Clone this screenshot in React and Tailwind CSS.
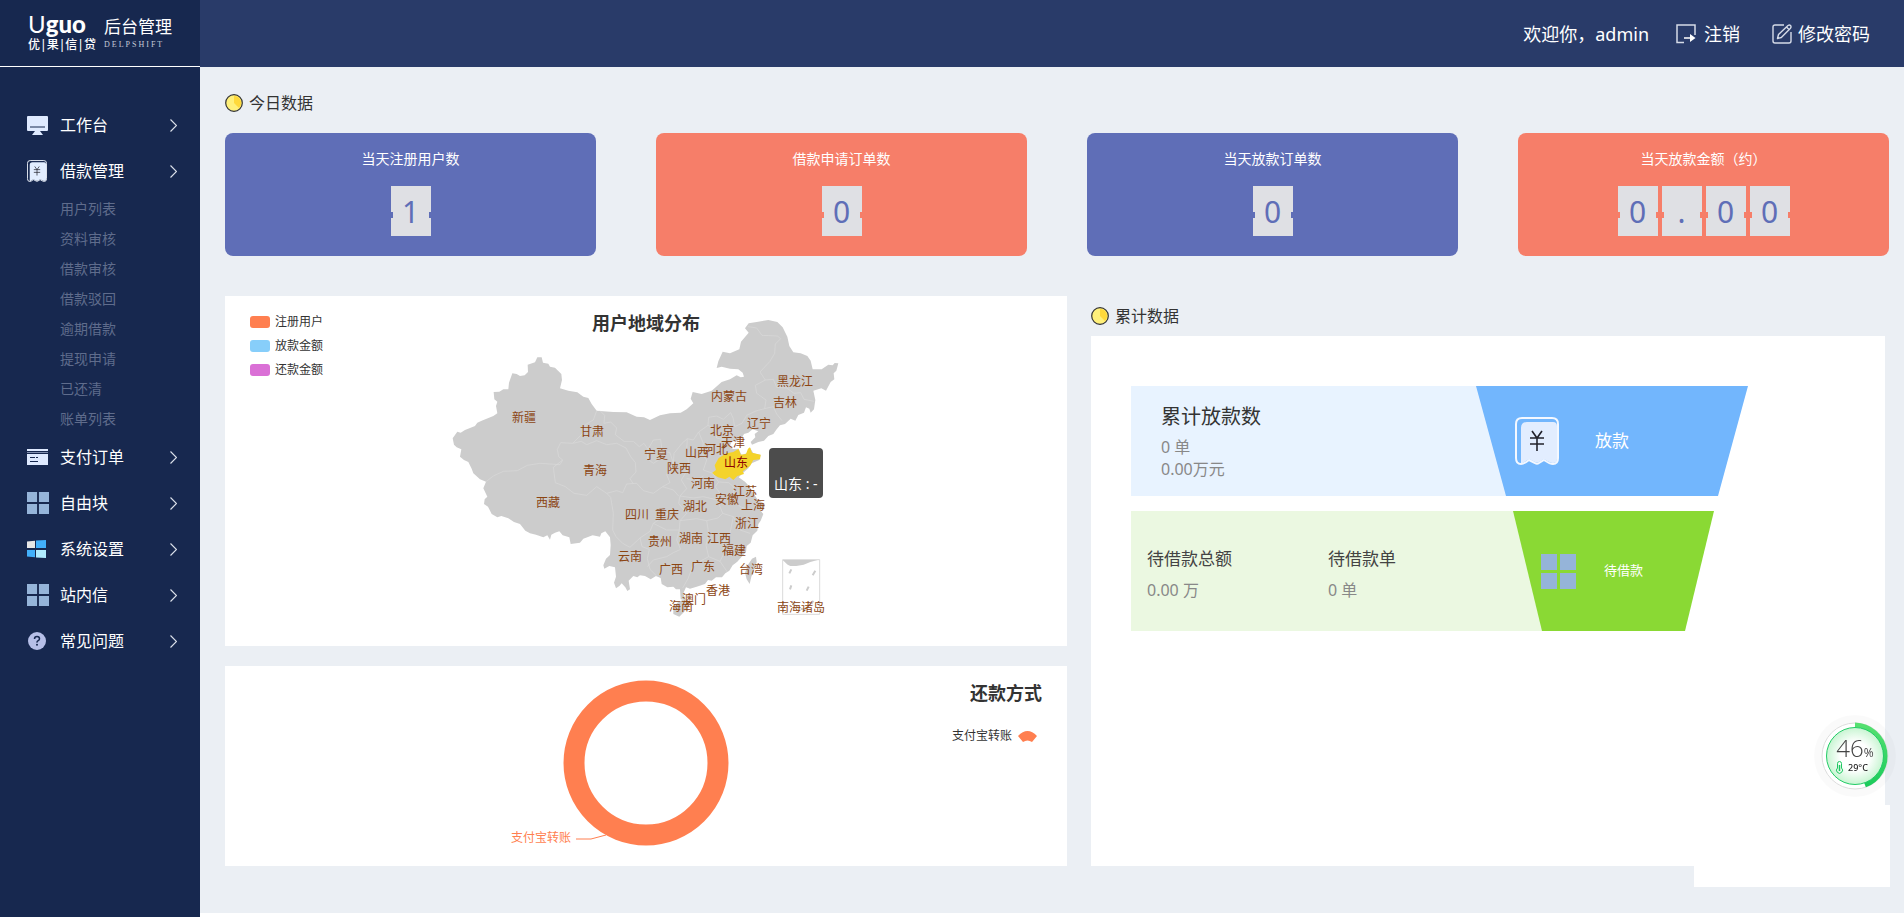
import { useState } from "react";

const MonitorIcon = () => (
  <svg width="21" height="19" viewBox="0 0 21 19">
    <rect width="21" height="15" rx="1" fill="#dfeaff" />
    <path d="M3 11h15" stroke="#17284f" strokeWidth="1" />
    <path d="M8 15h5l3 4H5z" fill="#dfeaff" />
  </svg>
);

const BillIcon = ({ size = "small" }) => (
  <svg
    className={size === "large" ? "w-[44px] h-[48px]" : "w-5 h-[22px]"}
    viewBox="0 0 44 48"
    fill="none"
  >
    <path
      d="M6 11q0-6 6-6h26q4 0 4 4v33q0 4-4 4-3 0-9-4l-5 3q-2 1.500-4 0l-6-3-8 5z"
      fill="#e2edff"
    />
    <path
      d="M1 7q0-6 6-6h30q6 0 6 6v34q0 6-5 6-3 0-9-4l-5 3q-2 1.500-4 0l-6-3q-5 4-8 4-5 0-5-6z"
      stroke="#f4f8ff"
      strokeWidth="2"
    />
    <path
      d="M17 14l5 7 5-7M15 21h14M15 27h14M22 21v13"
      stroke="#22222c"
      strokeWidth="1.6"
    />
  </svg>
);

const CardIcon = () => (
  <svg width="21" height="16" viewBox="0 0 21 16">
    <path d="M0 0h21v2H0zM0 5h21v11H0z" fill="#dfeaff" />
    <path d="M0 3.5h21" stroke="#7f8dad" />
    <path d="M3 8.5h5M9 8.5h2M3 12.5h8" stroke="#17284f" />
  </svg>
);

const BlocksIcon = ({ size = "small" }) => (
  <svg
    className={size === "large" ? "w-[35px] h-[35px]" : "w-[22px] h-[22px]"}
    viewBox="0 0 35 35"
    fill="#95b4d9"
  >
    <path d="M0 0h16v16H0zM19 0h16v16H19zM0 19h16v16H0zM19 19h16v16H19z" />
  </svg>
);

const WindowsIcon = () => (
  <svg width="19" height="18" viewBox="0 0 19 18">
    <path d="M0 1.5L8 .8V8H0z" fill="#e6e6e6" />
    <path d="M9 .6L19 0v8H9z" fill="#42b0fb" />
    <path d="M0 10h8v7.3l-8-.8z" fill="#42b0fb" />
    <path d="M9 10h10v8l-10-.6z" fill="#b0ecff" />
  </svg>
);

const HelpIcon = () => (
  <svg className="ml-px" width="18" height="18" viewBox="0 0 18 18" fill="none">
    <circle cx="9" cy="9" r="9" fill="#b6bfe8" />
    <path
      d="M6.5 7q0-2.5 2.5-2.5T11.5 6.8q0 1.2-1.3 1.9T9 10.6"
      stroke="#17284f"
      strokeWidth="1.5"
    />
    <circle cx="9" cy="12.8" r="1" fill="#17284f" />
  </svg>
);

const LogoutIcon = () => (
  <svg width="20" height="20" viewBox="0 0 20 20" fill="none">
    <path d="M19 11V1H1v17.5h7" stroke="#d5dbe8" strokeWidth="1.5" />
    <path d="M8 14h6" stroke="#fff" strokeWidth="1.5" />
    <path d="M14 10l5.5 4-5.5 4z" fill="#fff" />
  </svg>
);

const EditIcon = () => (
  <svg
    width="20"
    height="20"
    viewBox="0 0 20 20"
    fill="none"
    stroke="#d5dbe8"
    strokeWidth="1.4"
    strokeLinejoin="round"
  >
    <path d="M12 1H3Q1 1 1 3v14q0 2 2 2h14q2 0 2-2V8" />
    <path d="M5.5 14.5l1-4L16 1.5q1.5-1 2.5 0t0 2.7L9.3 13.5zM14.500 3l2.500 2.500" />
  </svg>
);

const PieIcon = () => (
  <svg width="18" height="18" viewBox="0 0 18 18">
    <circle cx="9" cy="9" r="8.3" fill="#fff07a" stroke="#333" strokeWidth="1.2" />
    <path d="M9 9V2a7 7 0 0 1 5 12z" fill="#ffd93b" />
  </svg>
);

const Chevron = () => (
  <svg width="7" height="13" viewBox="0 0 7 13" fill="none" stroke="#dbe0ea">
    <path d="M.5.5l6 6-6 6" strokeWidth="1.2" />
  </svg>
);

const menu = [
  { name: "工作台", icon: <MonitorIcon /> },
  {
    name: "借款管理",
    icon: <BillIcon />,
    children: [
      "用户列表",
      "资料审核",
      "借款审核",
      "借款驳回",
      "逾期借款",
      "提现申请",
      "已还清",
      "账单列表",
    ],
  },
  { name: "支付订单", icon: <CardIcon /> },
  { name: "自由块", icon: <BlocksIcon /> },
  { name: "系统设置", icon: <WindowsIcon /> },
  { name: "站内信", icon: <BlocksIcon /> },
  { name: "常见问题", icon: <HelpIcon /> },
];

const todayStats = [
  { title: "当天注册用户数", value: "1", color: "bg-[#5f6eb7]" },
  { title: "借款申请订单数", value: "0", color: "bg-[#f67e69]" },
  { title: "当天放款订单数", value: "0", color: "bg-[#5f6eb7]" },
  { title: "当天放款金额（约）", value: "0.00", color: "bg-[#f67e69]" },
];

const mapLegend = [
  { name: "注册用户", color: "bg-[#ff7f50]" },
  { name: "放款金额", color: "bg-[#87cefa]" },
  { name: "还款金额", color: "bg-[#da70d6]" },
];

// label centre points on the map canvas
const provinces = [
  ["新疆", 84, 118],
  ["甘肃", 152, 132],
  ["青海", 155, 171],
  ["西藏", 108, 203],
  ["宁夏", 216, 155],
  ["陕西", 239, 169],
  ["山西", 257, 153],
  ["河北", 276, 150],
  ["北京", 282, 131],
  ["天津", 293, 143],
  ["内蒙古", 289, 97],
  ["黑龙江", 355, 82],
  ["吉林", 345, 103],
  ["辽宁", 319, 124],
  ["河南", 263, 184],
  ["江苏", 305, 192],
  ["安徽", 287, 200],
  ["上海", 313, 206],
  ["浙江", 307, 224],
  ["湖北", 255, 207],
  ["四川", 197, 215],
  ["重庆", 227, 215],
  ["贵州", 220, 242],
  ["湖南", 251, 239],
  ["江西", 279, 239],
  ["福建", 294, 251],
  ["云南", 190, 257],
  ["广西", 231, 270],
  ["广东", 263, 267],
  ["台湾", 311, 270],
  ["香港", 278, 291],
  ["澳门", 254, 300],
  ["海南", 241, 307],
  ["南海诸岛", 361, 308],
];

const ChinaMap = () => (
  <svg width="420" height="340" viewBox="-4 0 420 340">
    <g transform="scale(0.33333)">
      <g fill="#ccc">
        <path d="M38 415L52 395 62 398 75 390 105 378 112 368 125 362 160 348 172 340 168 318 172 305 163 298 161 276 178 275 190 268 205 268 207 248 217 220 230 222 240 228 254 226 264 216 263 194 285 187 292 172 305 172 309 188 325 191 330 200 345 203 364 222 366 240 360 265 385 272 412 277 430 290 445 294 455 312 470 332 520 336 560 337 590 350 612 352 630 360 660 346 690 340 722 338 740 328 760 310 752 296 758 276 785 282 815 272 845 246 870 238 890 226 902 232 912 230 908 218 895 208 870 206 845 200 830 204 835 184 848 155 870 160 898 148 903 125 926 98 915 85 926 70 950 66 985 60 1012 66 1028 82 1042 110 1048 138 1060 157 1082 160 1102 168 1112 182 1118 208 1145 208 1165 194 1178 196 1184 189 1195 190 1189 212 1181 220 1183 238 1172 246 1158 272 1144 265 1120 272 1126 300 1122 328 1112 338 1108 326 1098 322 1092 338 1075 345 1066 362 1052 356 1035 372 1020 376 1010 388 1000 402 985 408 972 422 955 426 936 434 932 426 946 412 944 402 955 394 938 388 925 398 912 402 905 415 890 424 876 424 868 440 880 447 895 446 905 465 920 460 930 443 940 460 962 465 958 480 935 490 925 505 908 520 896 532 915 545 930 562 942 582 952 598 975 612 972 626 960 630 970 642 962 662 955 672 952 692 938 706 932 728 920 738 918 756 905 770 892 785 878 796 868 812 856 820 846 832 828 832 815 842 804 840 795 852 770 860 750 866 738 862 730 880 737 900 722 898 720 868 708 868 700 860 682 862 665 852 662 834 648 828 632 838 615 828 600 826 592 832 580 828 566 842 570 868 562 873 556 862 545 850 538 858 528 865 522 848 528 830 525 802 508 798 493 806 490 796 498 776 510 765 512 735 510 712 496 694 484 700 480 710 458 706 430 716 420 728 392 732 388 712 368 706 358 694 345 698 334 704 330 719 322 706 310 712 288 704 270 700 256 692 240 672 222 666 205 655 184 648 172 652 155 642 144 620 132 612 134 598 142 590 130 565 138 545 120 538 100 520 95 506 85 486 72 480 60 470 64 448 50 442 42 434z" />
        <path d="M700 925L712 908 728 900 750 906 745 922 732 936 718 950 700 942z" />
        <path d="M924 794L936 776 948 770 950 786 942 812 934 830 929 852 920 838 915 818z" />
      </g>
      <path
        d="M815 520L828 510 824 496 836 474 860 460 880 456 896 446 902 464 918 462 924 446 930 442 936 458 962 464 960 478 940 480 930 498 908 514 912 522 892 528 880 540 868 530 856 538 834 532z"
        fill="#f4d32b"
      />
      <g fill="none" stroke="#dadada" strokeWidth="2" strokeLinejoin="round">
        <path d="M470 332L460 360 436 374 430 398 398 430 362 428 352 448 356 470 368 480 360 494 300 490 262 496 232 512 190 514 160 528 138 545" />
        <path d="M480 332L494 346 492 370 512 366 530 384 526 404 552 424 580 424 598 440 612 430 624 448" />
        <path d="M398 430L424 424 440 434 470 422 500 434 530 430 558 444 572 470 586 488 588 516 570 536 580 552" />
        <path d="M368 480L340 502 346 548 376 560 402 580 440 586 470 560 500 580 512 592 520 640 518 690 528 710" />
        <path d="M500 580L530 572 548 578 560 552 590 550 610 572 640 580 668 560 700 570 716 588" />
        <path d="M624 448L640 420 662 418 666 452 656 480 640 490 622 476zM666 452L690 458 700 490 680 524 690 548 668 560" />
        <path d="M700 490L702 460 726 430 742 416 760 420 776 396 804 376 806 352 830 348 850 358 872 338 880 356 884 380 906 370 920 346 950 332 974 326 978 300 950 280 946 256 976 240 960 216 990 184 1004 160 1006 132 1022 116 1012 108 966 106 950 84 924 80" />
        <path d="M976 240L1000 238 1010 262 1040 264 1062 280 1082 278 1092 298 1122 304M974 326L1000 320 1010 342 1026 362" />
        <path d="M742 416L740 450 746 490 736 520 724 540 740 566 720 588 716 610 740 640 720 662" />
        <path d="M776 396L790 430 784 460 800 480 790 510 818 520M804 376L830 390 830 414 856 420 870 440" />
        <path d="M740 536L770 540 790 528M818 520L836 546 826 560 840 580 832 600 848 640 834 654 800 662 770 656 720 662 718 690 710 720 722 748 700 758 680 770 640 780 622 800" />
        <path d="M720 588L760 594 790 590 832 600M800 662L806 700 798 736 806 770 780 784 758 800 744 836 728 864" />
        <path d="M848 640L880 650 900 690 930 700M880 650L870 700 850 726 852 760 840 784 806 770M840 784L862 816" />
        <path d="M836 546L866 548 880 560 882 596 900 620 930 630" />
        <path d="M528 710L548 730 570 742 600 714 606 740 628 748 622 776 630 808 650 828M600 714L630 694 640 670 670 650 700 630M640 670L680 690 718 690" />
        <rect x="1028" y="779" width="111" height="164" strokeWidth="3" />
        <path d="M1048 820l6-12M1050 868l4-12M1056 906l8 10M1082 926l14 4M1100 872l6-12M1118 826l8-14M1120 902l-6 10" stroke="#ccc" strokeWidth="6" />
      </g>
      <path d="M1028 780h105l-22 6-20 8-22 4-18 0-8-4z" fill="#ccc" />
    </g>
    <g className="text-[12px]" fill="#8b4513" textAnchor="middle">
      {provinces.map(([name, x, y]) => (
        <text key={name} x={x} y={y + 4}>
          {name}
        </text>
      ))}
      <text x="296" y="167" fill="#8b0000">
        山东
      </text>
    </g>
  </svg>
);

const SectionTitle = ({ children }) => (
  <h2 className="flex items-center gap-1.5 text-base leading-6 text-[#333]">
    <PieIcon />
    {children}
  </h2>
);

const Sidebar = () => {
  const [open, setOpen] = useState("借款管理");

  return (
    <aside className="w-[200px] shrink-0 bg-[#17284f] text-white">
      <nav className="pt-[35px]">
        {menu.map((item) => (
          <div key={item.name}>
            <button
              onClick={() => setOpen(open === item.name ? "" : item.name)}
              className="flex items-center w-full h-[46px] pl-[27px] pr-[23px] text-base cursor-pointer"
            >
              <span className="w-[33px]">{item.icon}</span>
              <span className="flex-1 text-left">{item.name}</span>
              <Chevron />
            </button>
            {item.children && open === item.name && (
              <ul>
                {item.children.map((child) => (
                  <li key={child}>
                    <a
                      href="#"
                      className="block pl-[60px] text-sm leading-[30px] text-[#5f6c8c] hover:text-white"
                    >
                      {child}
                    </a>
                  </li>
                ))}
              </ul>
            )}
          </div>
        ))}
      </nav>
    </aside>
  );
};

const Header = () => (
  <header className="flex h-[67px] bg-[#293b69] text-white">
    <div className="flex w-[200px] shrink-0 gap-2 border-b border-white bg-[#17284f] pl-7 pt-3">
      <div className="w-[68px]">
        <p className="font-['Lato'] text-2xl leading-6">
          U<b className="font-black">guo</b>
        </p>
        <p className="mt-px flex justify-between text-xs leading-4 font-medium">
          <span>优</span>|<span>果</span>|<span>信</span>|<span>贷</span>
        </p>
      </div>
      <div className="pt-1">
        <p className="text-[17px] leading-[22px]">后台管理</p>
        <p className="mt-0.5 font-['Liberation_Serif'] text-[8px] leading-[10px] tracking-[2px] text-[#c5cbd8]">
          DELPSHIFT
        </p>
      </div>
    </div>
    <div className="flex flex-1 items-center justify-end pr-[34px] text-lg">
      <span>欢迎你，admin</span>
      <a href="#" className="ml-[27px] flex items-center gap-2">
        <LogoutIcon />
        注销
      </a>
      <a href="#" className="ml-8 flex items-center gap-1.5">
        <EditIcon />
        修改密码
      </a>
    </div>
  </header>
);

const StatCard = ({ title, value, color }) => (
  <div className={`rounded-lg pt-4 pb-5 text-center text-white ${color}`}>
    <p className="text-sm leading-5">{title}</p>
    <div className="mt-[17px] flex justify-center gap-1">
      {value.split("").map((digit, i) => (
        <span
          key={i}
          className="relative flex h-[50px] w-10 items-center justify-center bg-[#dfe0e4] text-[30px] text-[#5f6eb7]"
        >
          {digit}
          <i className={`absolute top-[26px] left-0 h-1.5 w-0.5 ${color}`} />
          <i className={`absolute top-[26px] right-0 h-1.5 w-0.5 ${color}`} />
        </span>
      ))}
    </div>
  </div>
);

const MapPanel = () => (
  <section className="relative h-[350px] bg-white pt-1">
    <h3 className="absolute inset-x-0 top-[13px] text-center text-lg font-bold text-[#333]">
      用户地域分布
    </h3>
    <ul className="absolute left-[25px] top-3.5 text-xs leading-6 text-[#333]">
      {mapLegend.map((item) => (
        <li key={item.name} className="flex items-center gap-[5px]">
          <i className={`h-3 w-5 rounded-[3px] ${item.color}`} />
          {item.name}
        </li>
      ))}
    </ul>
    <div className="relative mx-auto w-[420px]">
      <ChinaMap />
      <div className="absolute left-[333px] top-[148px] rounded bg-[#4c4c4c] px-[5px] pt-[26px] pb-1 text-sm leading-5 text-white whitespace-nowrap">
        山东 : -
      </div>
    </div>
  </section>
);

const RepayPanel = () => (
  <section className="relative h-[200px] bg-white">
    <svg className="mx-auto block" width="300" height="200" viewBox="0 0 300 200">
      <circle cx="150" cy="97" r="72" fill="none" stroke="#ff7f50" strokeWidth="21" />
      <path d="M80 173h15l15-4" fill="none" stroke="#ff7f50" />
      <text x="15" y="176" fill="#ff7f50" className="text-[12px]">
        支付宝转账
      </text>
    </svg>
    <div className="absolute right-[25px] top-[13px] flex flex-col items-end text-[#333]">
      <h3 className="text-lg leading-7 font-bold">还款方式</h3>
      <p className="mt-5 mr-[5px] flex items-center gap-1.5 text-xs leading-[18px]">
        支付宝转账
        <svg width="19" height="11" viewBox="0 0 19 11">
          <path d="M0 5Q9.5-5 19 5l-5 6q-4.5-3-9 0z" fill="#ff7f50" />
        </svg>
      </p>
    </div>
  </section>
);

const TotalPanel = () => (
  <section className="flex flex-col pr-1">
    <div className="flex h-10 items-center">
      <SectionTitle>累计数据</SectionTitle>
    </div>
    <div className="flex-1 bg-white pl-10 pt-[50px]">
      <div className="mr-[137px] flex h-[110px]">
        <div className="flex-1 bg-[#e8f3ff] pl-[30px] pt-[17px]">
          <h3 className="text-xl leading-7 text-[#333]">累计放款数</h3>
          <p className="mt-[5px] leading-[22px] text-[#888]">0 单</p>
          <p className="leading-[22px] text-[#888]">0.00万元</p>
        </div>
        <div className="-ml-[30px] flex w-[272px] items-center bg-[#72b6fd] pl-[39px] text-[17px] text-white [clip-path:polygon(0_0,100%_0,calc(100%-30px)_100%,30px_100%)]">
          <BillIcon size="large" />
          <span className="ml-9">放款</span>
        </div>
      </div>

      <div className="mr-[171px] mt-[15px] flex h-[120px]">
        <div className="flex flex-1 bg-[#ebf8e1] pl-4 pt-9">
          <div className="w-[181px]">
            <h3 className="text-[17px] leading-6 text-[#444]">待借款总额</h3>
            <p className="mt-[7px] leading-6 text-[#888]">0.00 万</p>
          </div>
          <div>
            <h3 className="text-[17px] leading-6 text-[#444]">待借款单</h3>
            <p className="mt-[7px] leading-6 text-[#888]">0 单</p>
          </div>
        </div>
        <div className="-ml-[29px] flex w-[201px] items-center bg-[#8ad934] pl-7 text-[13px] text-white [clip-path:polygon(0_0,100%_0,calc(100%-29px)_100%,29px_100%)]">
          <BlocksIcon size="large" />
          <span className="ml-7">待借款</span>
        </div>
      </div>
    </div>
  </section>
);

const MonitorBall = () => (
  <div className="fixed right-2 bottom-[120px] size-[82px]">
    <svg className="absolute inset-0" width="82" height="82" viewBox="0 0 82 82">
      <defs>
        <radialGradient id="ball">
          <stop offset="0.5" stopColor="#fff" />
          <stop offset="1" stopColor="#c8f5d2" />
        </radialGradient>
        <linearGradient id="arc" x1="0" y1="0" x2="0" y2="1">
          <stop offset="0" stopColor="#55e070" />
          <stop offset="1" stopColor="#1ccb5b" />
        </linearGradient>
      </defs>
      <circle cx="41" cy="41" r="41" fill="#000" fillOpacity="0.02" />
      <circle cx="41" cy="41" r="33" fill="#fff" stroke="#ddd" />
      <path d="M41 10a31 31 0 0 1 10 60" fill="none" stroke="url(#arc)" strokeWidth="5" />
      <circle cx="41" cy="41" r="28.5" fill="url(#ball)" stroke="#22cc66" />
      <g fill="none" stroke="#1fc862">
        <path d="M23.5 50v-1.500a2 2 0 0 1 4 0V53a3 3 0 1 1-4 0z" />
        <path d="M25.5 50v6" strokeWidth="1.5" />
      </g>
    </svg>
    <div className="relative pt-[19px] text-center text-[#444]">
      <p className="font-['Open_Sans'] text-2xl leading-7 font-light">
        46<span className="text-xs font-medium">%</span>
      </p>
      <p className="pl-1.5 text-[9px] leading-3 font-medium text-[#222]">29°C</p>
    </div>
  </div>
);

const App = () => {
  return (
    <div className="flex min-h-screen flex-col bg-white font-['Noto_Sans','Noto_Sans_CJK_SC',sans-serif]">
      <Header />
      <div className="flex flex-1">
        <Sidebar />
        <main className="mb-1 flex-1 bg-[#ebeff4] pt-6 pr-[15px] pb-[47px] pl-[25px]">
          <SectionTitle>今日数据</SectionTitle>
          <div className="mt-[18px] grid grid-cols-4 gap-[60px]">
            {todayStats.map((stat) => (
              <StatCard key={stat.title} {...stat} />
            ))}
          </div>

          {/* Charts */}
          <div className="mt-10 grid grid-cols-[842fr_798fr] gap-6">
            <div className="flex flex-col gap-5">
              <MapPanel />
              <RepayPanel />
            </div>
            <TotalPanel />
          </div>
        </main>
      </div>

      <div className="fixed right-3.5 bottom-[30px] h-[82px] w-[196px] bg-white" />
      <MonitorBall />
    </div>
  );
};

export default App;
